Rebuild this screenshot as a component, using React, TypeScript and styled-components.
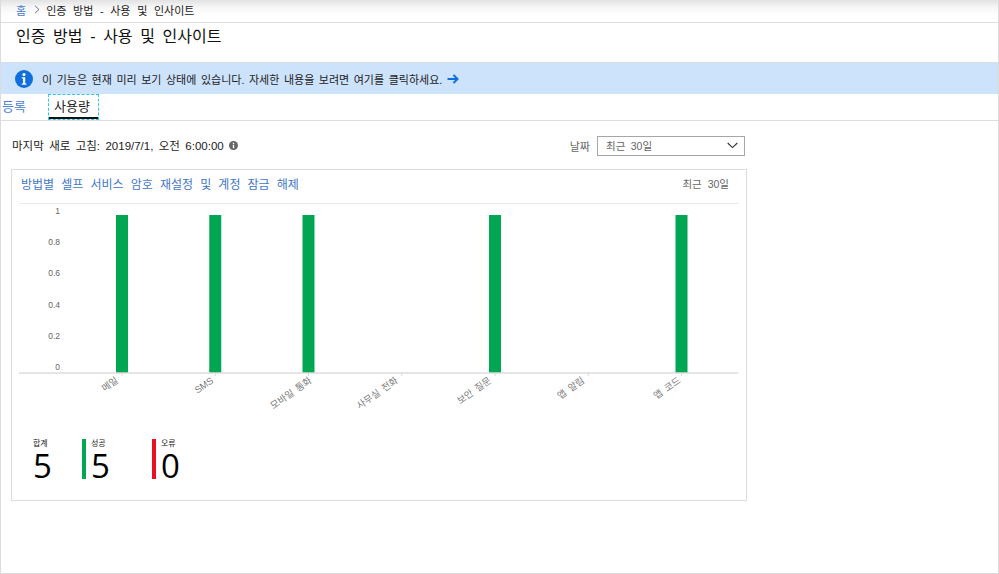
import React from "react";
import styled, { createGlobalStyle } from "styled-components";

const Global = createGlobalStyle`
  html, body { margin: 0; padding: 0; background: #fff; }
  body { font-family: "Liberation Sans", "Noto Sans CJK KR", sans-serif; color: #111; }
  * { box-sizing: border-box; }
`;

const Page = styled.div`
  width: 999px;
  height: 574px;
  border-left: 1px solid #dcdcdc;
  border-right: 1px solid #dcdcdc;
  border-bottom: 1px solid #dcdcdc;
  overflow: hidden;
  display: flex;
  flex-direction: column;
`;

const Breadcrumb = styled.div`
  height: 23px;
  flex: none;
  display: flex;
  align-items: center;
  padding: 0 0 3px 15px;
  font-size: 11px;
  word-spacing: 3.6px;
  background: linear-gradient(#e2e2e2 0, #f6f6f6 7px, #fff 16px);
  border-bottom: 1px solid #dedede;
`;

const Crumb = styled.span`
  color: #3f78c8;
`;

const CrumbCurrent = styled.span`
  color: #222;
  margin-left: 5px;
`;

const Title = styled.h1`
  margin: 0;
  height: 39px;
  flex: none;
  padding: 4px 0 0 15px;
  font-size: 16px;
  line-height: 20px;
  font-weight: 400;
  color: #111;
  word-spacing: 3.2px;
`;

const Banner = styled.div`
  height: 32px;
  flex: none;
  display: flex;
  align-items: center;
  padding-left: 14px;
  background: #cde2fb;
  border-top: 1px solid #d9dde2;
  font-size: 11px;
  word-spacing: 1.5px;
  color: #222;
`;

const BannerText = styled.span`
  margin-left: 9px;
`;

const BannerArrow = styled.svg`
  margin-left: 5px;
  margin-top: 1px;
`;

const Tabs = styled.div`
  height: 27px;
  flex: none;
  display: flex;
  align-items: stretch;
  border-bottom: 1px solid #dedede;
  font-size: 13px;
`;

const Tab = styled.div<{ $active?: boolean }>`
  display: flex;
  align-items: center;
  height: 26px;
  padding: ${(p) => (p.$active ? "0 0 3px 5px" : "0 0 3px 1px")};
  margin-left: ${(p) => (p.$active ? "21px" : "0")};
  width: ${(p) => (p.$active ? "51px" : "26px")};
  color: ${(p) => (p.$active ? "#222" : "#4a7fd6")};
  border: ${(p) => (p.$active ? "1px dashed #2ec8ee" : "none")};
  box-shadow: ${(p) => (p.$active ? "inset 0 -2px 0 #111" : "none")};
`;

const Content = styled.div`
  flex: 1;
  padding: 0 0 0 10px;
`;

const StatusRow = styled.div`
  width: 734px;
  height: 48px;
  display: flex;
  align-items: center;
  justify-content: space-between;
  padding: 1px 0 0 1px;
`;

const Refreshed = styled.div`
  display: flex;
  align-items: center;
  gap: 5px;
  color: #222;
  font-size: 11.5px;
  word-spacing: 2.2px;
  margin-top: -1px;
`;

const DateFilter = styled.div`
  display: flex;
  align-items: center;
  gap: 7px;
  color: #666;
  font-size: 11px;
`;

const Select = styled.div`
  width: 148px;
  height: 20px;
  border: 1px solid #a6a6a6;
  display: flex;
  align-items: center;
  justify-content: space-between;
  padding: 0 6px 0 8px;
  color: #666;
  font-size: 10.5px;
  word-spacing: 2.5px;
`;

const Card = styled.section`
  width: 736px;
  height: 332px;
  border: 1px solid #dcdcdc;
  padding: 0 7px 0 7px;
`;

const CardHeader = styled.div`
  height: 34px;
  display: flex;
  align-items: center;
  justify-content: space-between;
  padding: 0 10px 6px 2px;
  border-bottom: 1px solid #eaeaea;
`;

const CardTitle = styled.div`
  color: #3f78c8;
  font-size: 12px;
  word-spacing: 3.8px;
`;

const CardRange = styled.div`
  color: #666;
  font-size: 10.5px;
  word-spacing: 3px;
`;

const ChartSvg = styled.svg`
  display: block;
`;

const Stats = styled.div`
  display: flex;
  align-items: flex-start;
  margin-top: 1px;
  padding-left: 14px;
`;

const Stat = styled.div<{ $color?: string; $width: number }>`
  width: ${(p) => p.$width}px;
  height: 40px;
  flex: none;
  border-left: ${(p) => (p.$color ? `4px solid ${p.$color}` : "none")};
  padding-left: ${(p) => (p.$color ? "5px" : "0")};
  display: flex;
  flex-direction: column;
`;

const StatLabel = styled.div`
  font-size: 8px;
  line-height: 10px;
  color: #222;
`;

const StatValue = styled.div`
  font-family: "Open Sans", sans-serif;
  font-size: 33px;
  line-height: 27px;
  margin-top: 3px;
  color: #000;
`;

const cats: [string, boolean, number][] = [
  ["메일", true, 0],
  ["SMS", true, 2],
  ["모바일 통화", true, 7],
  ["사무실 전화", false, 0],
  ["보안 질문", true, 0],
  ["앱 알림", false, 0],
  ["앱 코드", true, 3],
];
const yLabels: [string, number][] = [
  ["1", 7],
  ["0.8", 38],
  ["0.6", 69],
  ["0.4", 101],
  ["0.2", 132],
  ["0", 163],
];

const Chart = () => (
  <ChartSvg width="719" height="234" viewBox="0 0 719 234">
    {yLabels.map(([t, y]) => (
      <text key={t} x="41" y={y + 3} textAnchor="end" fontSize="8.5" fill="#666" fontFamily="Liberation Sans, sans-serif">
        {t}
      </text>
    ))}
    {cats.map(([name, filled, dx], i) => {
      const cx = 103 + i * 93.25;
      const lx = cx - 3 + dx;
      return (
        <g key={name}>
          {filled && <rect x={cx - 6} y="11" width="12" height="158" fill="#00a651" />}
          <line x1={cx} x2={cx} y1="169" y2="172" stroke="#d8d8d8" />
          <text
            x={lx}
            y="178"
            textAnchor="end"
            fontSize="9.5"
            fill="#7a7a7a"
            wordSpacing="1.5"
            fontFamily="Liberation Sans, Noto Sans CJK KR, sans-serif"
            transform={`rotate(-35 ${lx} 178)`}
          >
            {name}
          </text>
        </g>
      );
    })}
    <line x1="0" x2="719" y1="169" y2="169" stroke="#dcdcdc" strokeWidth="1.5" />
  </ChartSvg>
);

export default function App() {
  return (
    <>
      <Global />
      <Page>
        <Breadcrumb>
          <Crumb>홈</Crumb>
          <svg width="8" height="9" viewBox="0 0 8 9" style={{ marginLeft: 7 }}>
            <path d="M2 .8 6 4.5 2 8.2" fill="none" stroke="#777" strokeWidth="1" />
          </svg>
          <CrumbCurrent>인증 방법 - 사용 및 인사이트</CrumbCurrent>
        </Breadcrumb>
        <Title>인증 방법 - 사용 및 인사이트</Title>
        <Banner>
          <svg width="18" height="18" viewBox="0 0 18 18">
            <circle cx="9" cy="9" r="9" fill="#0f6fde" />
            <circle cx="9" cy="4.6" r="1.6" fill="#fff" />
            <path d="M6.8 7.2h3.4v6.2h1.2v1.4H6.8v-1.4H8V8.6H6.8z" fill="#fff" />
          </svg>
          <BannerText>이 기능은 현재 미리 보기 상태에 있습니다. 자세한 내용을 보려면 여기를 클릭하세요.</BannerText>
          <BannerArrow width="12" height="10" viewBox="0 0 12 10">
            <path d="M0.5 5H10M6.5 1l4 4-4 4" fill="none" stroke="#0f6fde" strokeWidth="2" />
          </BannerArrow>
        </Banner>
        <Tabs>
          <Tab>등록</Tab>
          <Tab $active>사용량</Tab>
        </Tabs>
        <Content>
          <StatusRow>
            <Refreshed>
              마지막 새로 고침: 2019/7/1, 오전 6:00:00
              <svg width="9" height="9" viewBox="0 0 9 9">
                <circle cx="4.5" cy="4.5" r="4.5" fill="#666" />
                <rect x="3.8" y="3.8" width="1.4" height="3.4" fill="#fff" />
                <rect x="3.8" y="1.8" width="1.4" height="1.3" fill="#fff" />
              </svg>
            </Refreshed>
            <DateFilter>
              날짜
              <Select>
                최근 30일
                <svg width="11" height="7" viewBox="0 0 11 7">
                  <path d="M.7 1l4.8 4.6L10.3 1" fill="none" stroke="#333" strokeWidth="1.1" />
                </svg>
              </Select>
            </DateFilter>
          </StatusRow>
          <Card>
            <CardHeader>
              <CardTitle>방법별 셀프 서비스 암호 재설정 및 계정 잠금 해제</CardTitle>
              <CardRange>최근 30일</CardRange>
            </CardHeader>
            <Chart />
            <Stats>
              <Stat $width={49}>
                <StatLabel>합계</StatLabel>
                <StatValue>5</StatValue>
              </Stat>
              <Stat $width={70} $color="#00a651">
                <StatLabel>성공</StatLabel>
                <StatValue>5</StatValue>
              </Stat>
              <Stat $width={60} $color="#e81123">
                <StatLabel>오류</StatLabel>
                <StatValue>0</StatValue>
              </Stat>
            </Stats>
          </Card>
        </Content>
      </Page>
    </>
  );
}
